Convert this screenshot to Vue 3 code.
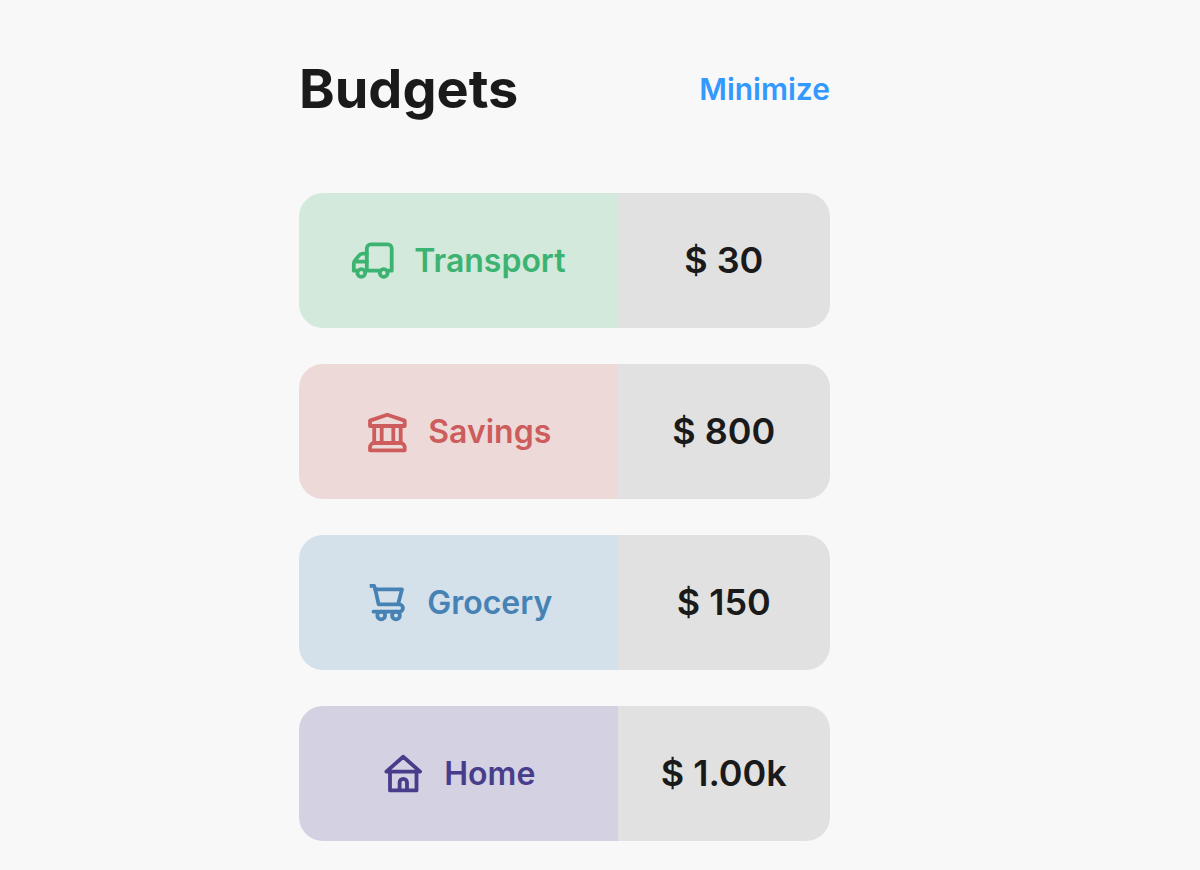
<script setup>
import { ref } from 'vue'

const minimized = ref(false)

const budgets = [
  { id: 'transport', name: 'Transport', amount: '$ 30' },
  { id: 'savings', name: 'Savings', amount: '$ 800' },
  { id: 'grocery', name: 'Grocery', amount: '$ 150' },
  { id: 'home', name: 'Home', amount: '$ 1.00k' }
]
</script>

<template>
  <main class="page">
    <section class="budgets">
      <header class="header">
        <h1 class="title">Budgets</h1>
        <button class="toggle" type="button" @click="minimized = !minimized">
          {{ minimized ? 'Expand' : 'Minimize' }}
        </button>
      </header>

      <ul v-if="!minimized" class="list">
        <li v-for="b in budgets" :key="b.id" class="card" :class="b.id">
          <div class="category">
            <svg class="icon" viewBox="0 0 45 45" aria-hidden="true">
              <g v-if="b.id === 'transport'">
                <path d="M15.800 32.700V10.300a4 4 0 0 1 4-4h16.900a4 4 0 0 1 4 4v22.400h-3.500M28 32.700H15" />
                <path d="M15.800 15.700h-3.800c-2 0-3.200.7-4.300 2.200l-3.700 4.500c-.9 1-1.200 1.800-1.200 3v7.300h3M3.500 23.700h12.300" />
                <circle cx="10.300" cy="35" r="3.900" />
                <circle cx="32.700" cy="35" r="3.900" />
              </g>
              <g v-else-if="b.id === 'savings'">
                <path d="M5 17V11.600l17.300-5.800 17.400 5.800V17z" />
                <path d="M9.200 17v16.500M16.700 17v16.500M28.300 17v16.500M35.700 17v16.500" />
                <path d="M5 41.300v-3a4.300 4.300 0 0 1 4.300-4.300h26.100a4.300 4.300 0 0 1 4.300 4.300v3z" />
              </g>
              <g v-else-if="b.id === 'grocery'">
                <path stroke-linecap="butt" d="M5.700 5.900h4.400l1.200 3.400h26.700l-4 15.100" />
                <path d="M11.300 9.300l3.300 15.100h20.700a3.650 3.650 0 0 1 0 7.300H9.500" />
                <circle cx="17.200" cy="35.500" r="3.900" />
                <circle cx="32" cy="35.500" r="3.900" />
              </g>
              <g v-else>
                <path d="M5.300 20.600L22.200 5.800l16.900 14.800z" />
                <path d="M9 21v18.400h26.500V21" />
                <path d="M18.600 39v-7.500a3.700 3.700 0 0 1 7.400 0V39" />
              </g>
            </svg>
            <span class="name">{{ b.name }}</span>
          </div>
          <div class="amount">{{ b.amount }}</div>
        </li>
      </ul>
    </section>
  </main>
</template>

<style>
body {
  margin: 0;
  background: #f8f8f8;
}
</style>

<style scoped>
.page {
  display: grid;
  grid-template-columns: 299fr 531fr 370fr;
  padding: 56px 0 29px;
  color: #1a1a1a;
  font-family: Inter, "Liberation Sans", sans-serif;
}

.budgets {
  grid-column: 2;
}

.header {
  display: flex;
  align-items: center;
  justify-content: space-between;
  margin-bottom: 71px;
}

.title {
  margin: 0;
  font-size: 54px;
  font-weight: 700;
  line-height: 66px;
}

.toggle {
  padding: 0;
  border: 0;
  background: none;
  color: #3399ff;
  font-family: inherit;
  font-size: 30px;
  font-weight: 600;
  line-height: 36px;
  cursor: pointer;
}

.list {
  display: flex;
  flex-direction: column;
  gap: 36px;
  margin: 0;
  padding: 0;
  list-style: none;
}

.card {
  display: grid;
  grid-template-columns: 3fr 2fr;
  min-height: 135px;
  border-radius: 24px;
  overflow: hidden;
}

.category {
  display: flex;
  align-items: center;
  justify-content: center;
  gap: 18px;
}

.icon {
  width: 45px;
  height: 45px;
  fill: none;
  stroke: currentColor;
  stroke-width: 3.8;
  stroke-linecap: round;
  stroke-linejoin: round;
}

.name {
  font-size: 32px;
  font-weight: 600;
  line-height: 40px;
}

.amount {
  display: flex;
  align-items: center;
  justify-content: center;
  padding-bottom: 2px;
  background: #e1e1e1;
  font-size: 36px;
  font-weight: 600;
  line-height: 44px;
}

.transport .category {
  background: #d2e9dc;
  color: #3cb371;
}

.savings .category {
  background: #eed9d9;
  color: #cd5c5c;
}

.grocery .category {
  background: #d4e0ea;
  color: #4682b4;
}

.home .category {
  background: #d4d1e2;
  color: #483d8b;
}
</style>
